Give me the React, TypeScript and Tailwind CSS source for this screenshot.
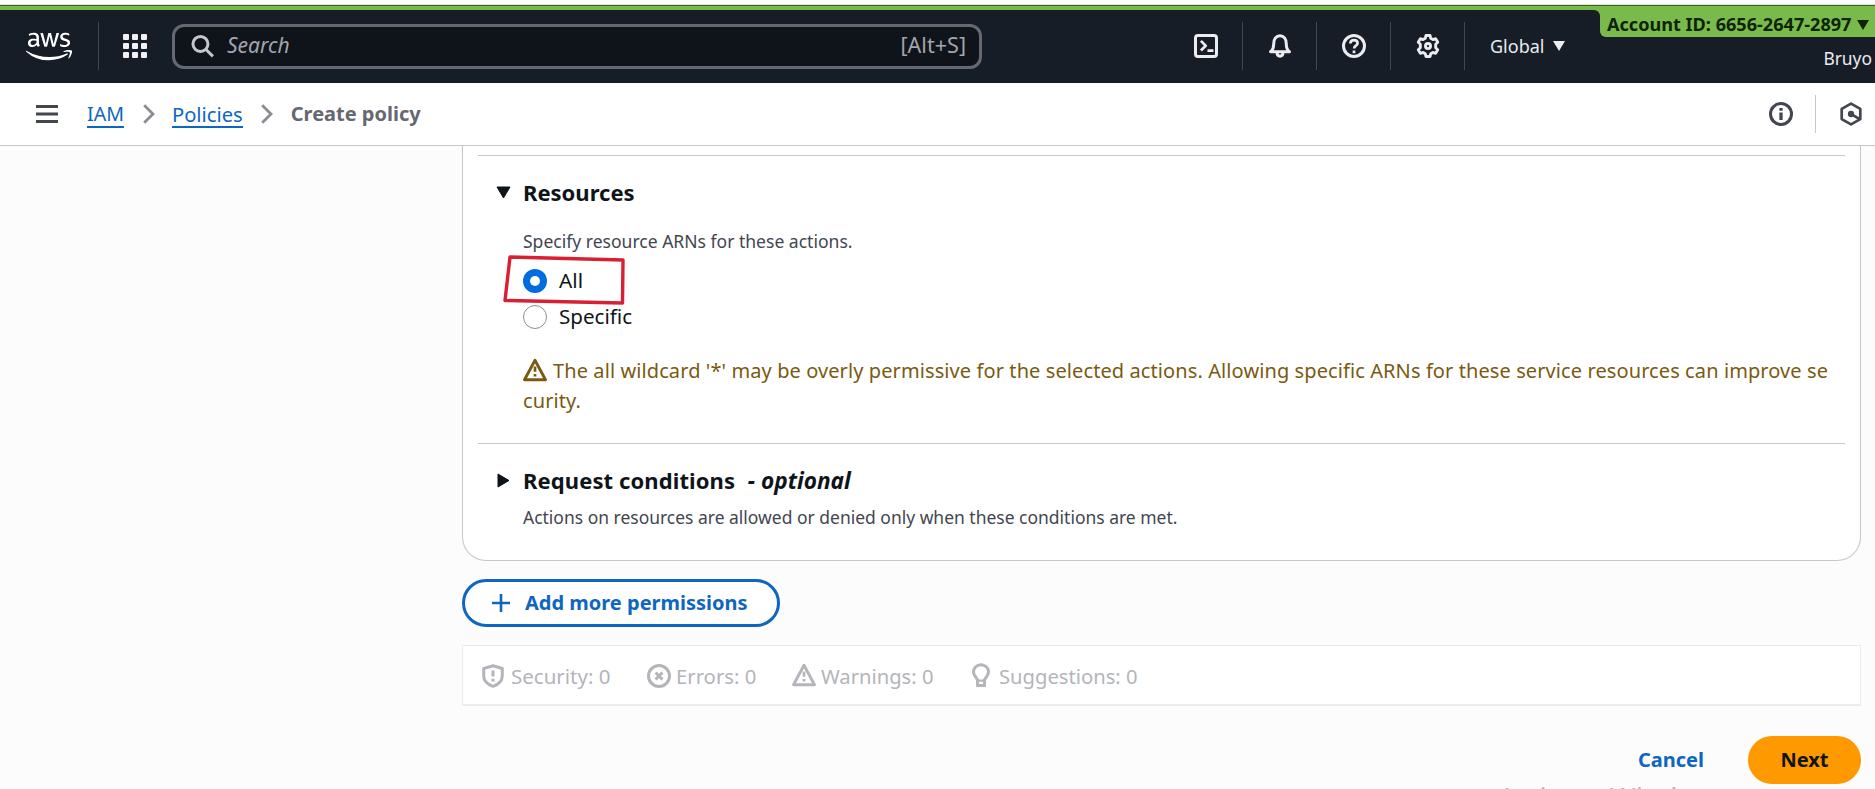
import type { ReactNode } from "react";
import { FaAws } from "react-icons/fa";

function Icon({ children, size = 24, w = 2 }: { children: ReactNode; size?: number; w?: number }) {
  return (
    <svg
      width={size}
      height={size}
      viewBox="0 0 16 16"
      fill="none"
      stroke="currentColor"
      strokeWidth={w}
      strokeLinejoin="round"
      className="block shrink-0"
    >
      {children}
    </svg>
  );
}

const WarningIcon = () => (
  <Icon w={1.9}>
    <path d="M8 1.5 15 14.500H1Z" />
    <path d="M8 5.6v3.6M8 10.6v1.8" strokeWidth={1.8} />
  </Icon>
);

const Divider = () => <div className="h-12 w-px shrink-0 bg-[#414750]" />;

const Cell = ({ children }: { children: ReactNode }) => (
  <div className="flex w-[73px] justify-center">{children}</div>
);

function TopBar() {
  return (
    <header className="relative flex h-[73px] items-center bg-[#161d26] pb-px text-[#ebebf0]">
      <div className="flex w-[98px] justify-center">
        <FaAws className="block h-[37px] w-[46px] text-white" />
      </div>
      <Divider />
      <div className="ml-6 grid grid-cols-3 gap-[3px]">
        {Array.from({ length: 9 }, (_, i) => (
          <div key={i} className="size-[6px] rounded-[1px] bg-[#f0f0f5]" />
        ))}
      </div>
      <div className="ml-[25px] flex h-[45px] w-[810px] items-center rounded-xl border-3 border-[#656871] bg-[#0f141a] pr-[13px] pb-px pl-[16px] text-[21.600px] text-[#a4a4ad]">
        <span className="text-[#c6c6cd]">
          <Icon>
            <circle cx="6.3" cy="6.6" r="5" />
            <path d="m10 10.300 4.600 4.600" />
          </Icon>
        </span>
        <span className="ml-[12px] text-[21px] italic">Search</span>
        <span className="ml-auto">[Alt+S]</span>
      </div>
      <div className="ml-[188px] flex items-center">
        <div className="w-[72px] pl-6">
          <Icon>
            <rect x="1" y="1" width="14" height="14" rx="1.6" />
            <path d="m4.6 4.6 3.2 3.2-3.2 3.2M9 11.1h4" strokeWidth={1.8} />
          </Icon>
        </div>
        <Divider />
        <Cell>
          <Icon>
            <path d="M1.7 11.8h12.6c-1.5-1.1-2.1-2.4-2.1-5.2 0-3.4-1.7-5.4-4.2-5.4S3.800 3.200 3.800 6.600c0 2.800-.6 4.100-2.100 5.200Z" />
            <path d="M6 12.200c0 1.700.9 2.600 2 2.600s2-.9 2-2.600" />
          </Icon>
        </Cell>
        <Divider />
        <Cell>
          <Icon>
            <circle cx="8" cy="8" r="7" />
            <path d="M5.600 6.300c0-1.400 1-2.200 2.400-2.200s2.400.8 2.400 2.100c0 1.600-2.300 1.600-2.300 3.400M8 11v1.900" strokeWidth={1.8} />
          </Icon>
        </Cell>
        <Divider />
        <Cell>
          <Icon w={1.9}>
            <path d="M6.600 1h2.800l.4 1.900 1.400.8 1.900-.6 1.400 2.400-1.400 1.300v2.400l1.400 1.300-1.400 2.400-1.900-.6-1.400.8-.4 1.900H6.600l-.4-1.900-1.400-.8-1.900.6-1.400-2.400 1.400-1.300V6.800L1.500 5.500l1.400-2.400 1.900.6 1.400-.8Z" />
            <circle cx="8" cy="8" r="1.700" />
          </Icon>
        </Cell>
        <Divider />
        <span className="ml-[25px] text-[18px]">Global</span>
        <svg width="12" height="10" viewBox="0 0 12 10" className="ml-[9px]">
          <path d="M0 0h12L6 10Z" fill="currentColor" />
        </svg>
      </div>
      <div className="absolute top-0 right-[275px] size-[6px] bg-[#7aba4c]">
        <div className="size-[6px] rounded-tr-md bg-[#161d26]" />
      </div>
      <div className="absolute -top-[4px] right-0 flex h-[31px] w-[275px] items-center rounded-bl-md bg-[#7aba4c] pt-[6px] pl-[7px] text-[#0f2305]">
        <span className="text-[18.100px] font-bold whitespace-nowrap">Account ID: 6656-2647-2897</span>
        <svg width="12" height="10" viewBox="0 0 12 10" className="mr-[6px] ml-auto shrink-0">
          <path d="M0 0h12L6 10Z" fill="currentColor" />
        </svg>
      </div>
      <span className="absolute top-[35px] right-[3px] text-[17.400px]">Bruyo</span>
    </header>
  );
}

const Chevron = () => (
  <svg width="12" height="20" viewBox="0 0 12 20" className="shrink-0">
    <path d="m1.200 1.200 8.800 8.800-8.800 8.800" fill="none" stroke="#8c8c94" strokeWidth="2.800" />
  </svg>
);

function Breadcrumbs() {
  return (
    <nav className="flex h-[63px] items-center border-b border-[#c6c6cd] bg-white text-[20px] text-[#424650]">
      <svg width="22" height="18" viewBox="0 0 22 18" className="ml-9">
        <path d="M0 1.500h22M0 9h22M0 16.500h22" stroke="currentColor" strokeWidth="3" />
      </svg>
      <a className="mt-[2px] ml-[29px] border-b-2 border-[#0f66c0] text-[19.600px] leading-[24px] text-[#0f66c0]">IAM</a>
      <div className="ml-[19px]"><Chevron /></div>
      <a className="mt-[2px] ml-[17px] border-b-2 border-[#0f66c0] text-[20.200px] leading-[24px] text-[#0f66c0]">Policies</a>
      <div className="ml-[18px]"><Chevron /></div>
      <span className="ml-[18px] font-bold text-[#656871]">Create policy</span>
      <div className="mr-[12px] ml-auto flex items-center">
        <Icon>
          <circle cx="8" cy="8" r="7" />
          <path d="M8 4v1.800M8 7v5" strokeWidth={2.200} />
        </Icon>
        <div className="ml-[22px] h-[38px] w-px bg-[#c6c6cd]" />
        <div className="ml-[23px]">
          <Icon w={1.800}>
            <path d="M8 1.100 14.200 4.600v6.800L8 14.900 1.800 11.400V4.600Z" />
            <circle cx="8" cy="8" r="1.200" fill="currentColor" />
            <path d="m8 8 5.500 3.200" />
          </Icon>
        </div>
      </div>
    </nav>
  );
}

function Resources() {
  return (
    <section className="border-t border-[#c6c6cd] pl-[45px]">
      <h2 className="relative mt-[21px] text-[22px] leading-[30px] font-bold">
        <svg width="15" height="13" viewBox="0 0 15 13" className="absolute top-[9px] -left-[27px]">
          <path d="M1 1h13L7.500 12Z" fill="currentColor" stroke="currentColor" strokeLinejoin="round" />
        </svg>
        Resources
      </h2>
      <p className="mt-[22px] text-[17.550px] leading-6 text-[#424650]">Specify resource ARNs for these actions.</p>
      <div className="relative mt-[13px] space-y-[6px] text-[20px] leading-[30px]">
        <label className="flex items-center gap-[12px]">
          <span className="flex size-6 items-center justify-center rounded-full bg-[#006ce0]">
            <span className="size-[10px] rounded-full bg-white" />
          </span>
          <span className="-mt-px mb-px text-[20.800px]">All</span>
        </label>
        <label className="flex items-center gap-[12px]">
          <span className="size-6 rounded-full border border-[#8c8c94] bg-white" />
          <span className="-mt-px mb-px text-[20.600px]">Specific</span>
        </label>
        <svg width="122" height="52" viewBox="0 0 122 52" className="absolute -top-[12px] -left-[20px]">
          <path d="m7 3 113 3-.5 43L2 46.500Z" fill="none" stroke="#d91f34" strokeWidth="3.400" strokeLinejoin="round" />
        </svg>
      </div>
      <div className="mt-6 flex text-[20px] leading-[30px] tracking-[0.095px] whitespace-nowrap text-[#7a5a10]">
        <div className="pt-[2px] pr-[6px]"><WarningIcon /></div>
        The all wildcard '*' may be overly permissive for the selected actions. Allowing specific ARNs for these service resources can improve se
      </div>
      <div className="text-[20px] leading-[30px] tracking-[0.095px] text-[#7a5a10]">curity.</div>
    </section>
  );
}

function RequestConditions() {
  return (
    <section className="mt-[27px] border-t border-[#c6c6cd] pl-[45px]">
      <h2 className="relative mt-[21px] text-[22px] leading-[30px] font-bold">
        <svg width="13" height="15" viewBox="0 0 13 15" className="absolute top-2 -left-[26px]">
          <path d="M1 1v13l11-6.500Z" fill="currentColor" stroke="currentColor" strokeLinejoin="round" />
        </svg>
        <span className="tracking-[0.100px]">Request conditions</span> <i className="ml-[7px] text-[22.600px]">- optional</i>
      </h2>
      <p className="mt-[9px] text-[17.480px] leading-6 text-[#424650]">
        Actions on resources are allowed or denied only when these conditions are met.
      </p>
    </section>
  );
}

function Findings() {
  return (
    <div className="mt-[18px] flex h-[61px] items-center border border-b-2 border-[#ebebf0] bg-white pt-px pl-[18px] text-[20.300px] text-[#b4b4bb]">
      <div className="flex w-[166px] items-center gap-[6px]">
        <Icon>
          <path d="M8 1.200 14.200 3v4.800c0 3.300-2.400 5.700-6.200 7.100-3.800-1.400-6.200-3.800-6.200-7.100V3Z" />
          <path d="M8 4.400v4M8 9.800v1.900" />
        </Icon>
        <span className="pt-px text-[20.500px]">Security: 0</span>
      </div>
      <div className="flex w-[145px] items-center gap-[5px]">
        <Icon>
          <circle cx="8" cy="8" r="7" />
          <path d="m5.700 5.700 4.600 4.600m0-4.600-4.600 4.600" />
        </Icon>
        <span className="pt-px">Errors: 0</span>
      </div>
      <div className="flex w-[177px] items-center gap-[5px]">
        <WarningIcon />
        <span className="pt-px text-[20.200px]">Warnings: 0</span>
      </div>
      <div className="flex items-center gap-[6px]">
        <Icon>
          <path d="M5.700 11.700c0-2-2.700-2.700-2.700-5.700 0-2.800 2.200-4.900 5-4.900s5 2.100 5 4.900c0 3-2.700 3.700-2.700 5.700V15H5.700Z" strokeLinejoin="miter" />
          <path d="M5.700 11.800h4.600M5.700 14.700h4.600" strokeWidth={1.500} />
        </Icon>
        <span className="pt-px text-[20.200px]">Suggestions: 0</span>
      </div>
    </div>
  );
}

export default function App() {
  return (
    <div className="relative flex h-[789px] w-[1875px] flex-col overflow-hidden bg-[#fcfcfd] font-['Noto_Sans',sans-serif] text-[#0f141a]">
      <div className="h-[5px] shrink-0 border-b border-[#d4e8c3] bg-white" />
      <div className="h-[5px] shrink-0 border-t border-[#3f5f2b] bg-[#7aba4c]" />
      <TopBar />
      <Breadcrumbs />
      <main className="ml-[462px] w-[1399px]">
        <div className="h-[415px] rounded-b-3xl border border-t-0 border-[#c6c6cd] bg-white px-[15px] pt-[9px]">
          <Resources />
          <RequestConditions />
        </div>
        <button className="mt-[18px] flex h-12 w-[318px] items-center rounded-full border-3 border-[#0f66c0] bg-white pl-[27px] text-[20px] font-bold text-[#0f66c0]">
          <svg width="18" height="18" viewBox="0 0 18 18">
            <path d="M9 0v18M0 9h18" stroke="currentColor" strokeWidth="2.600" />
          </svg>
          <span className="ml-[15px] whitespace-nowrap">Add more permissions</span>
        </button>
        <Findings />
        <div className="mt-[30px] flex items-center justify-end text-[20px] font-bold">
          <span className="mr-[44px] text-[#0f66c0]">Cancel</span>
          <button className="h-12 w-[113px] rounded-full bg-[#ff9900]">Next</button>
        </div>
      </main>
      <span className="absolute top-[782px] left-[1498px] text-[28px] leading-[30px] whitespace-nowrap text-[#b5b5b8]">Activate Windows</span>
    </div>
  );
}
